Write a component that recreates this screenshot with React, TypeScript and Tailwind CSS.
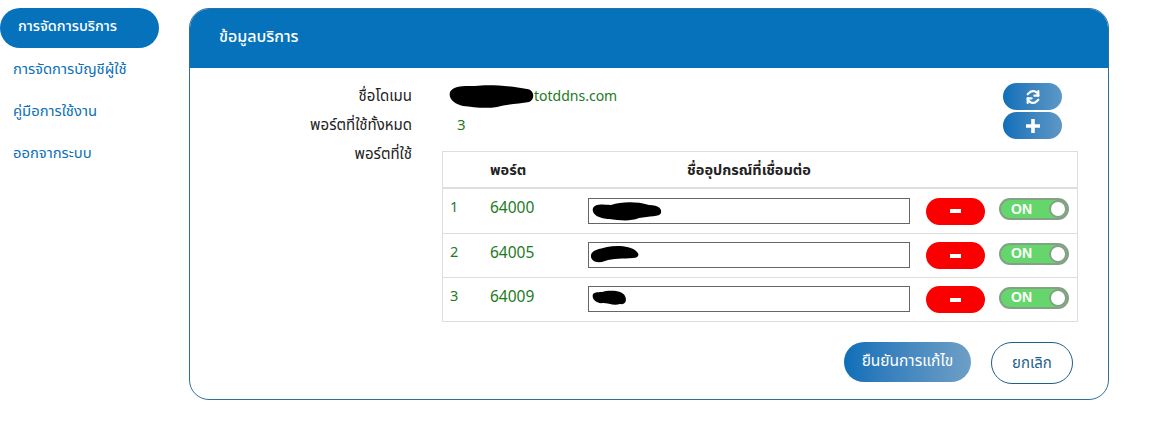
import React from 'react';

const FONT = '"Noto Sans", "Noto Sans Thai", "Open Sans", "Liberation Sans", sans-serif';

const ports = [
  { id: 1, port: '64000', blob: 'M4 8C7 3 13 5 22 5C32 2 46 1 60 5C70 5 73 9 72 13C71 17 60 16 50 18C40 22 30 20 20 19C12 19 2 15 4 8Z', blobW: 76, top: 'top-[1px]', left: 'left-[0px]' },
  { id: 2, port: '64005', blob: 'M2 11C3 6 10 5 18 3C28 1 42 2 47 7C51 10 50 14 44 14C34 15 24 14 16 17C8 20 1 17 2 11Z', blobW: 52, top: 'top-[1px]', left: 'left-[0px]' },
  { id: 3, port: '64009', blob: 'M3 6C7 3 10 5 16 3C24 2 33 3 35 8C37 12 36 17 30 16C24 18 18 15 13 15C7 16 1 11 3 6Z', blobW: 40, top: 'top-[1px]', left: 'left-[1px]' },
];

function Blob({ d, w }: { d: string; w: number }) {
  return (
    <svg width={w} height={22} viewBox={`0 0 ${w} 22`} className="block">
      <path d={d} fill="#000" />
    </svg>
  );
}

function PillButton({ children, red }: { children: React.ReactNode; red?: boolean }) {
  return (
    <button
      className={`flex h-[27px] w-[59px] items-center justify-center rounded-full ${
        red ? 'bg-[#fb0000]' : 'bg-gradient-to-r from-[#0a6fb8] to-[#5c98c6]'
      }`}
    >
      {children}
    </button>
  );
}

function Toggle() {
  return (
    <div className="flex h-[22px] w-[70px] items-center justify-between rounded-full border-2 border-[#84a086] bg-[#65d66b] pl-[10px] pr-0">
      <span className="text-[14px] font-bold text-white" style={{ fontFamily: '"Liberation Sans", sans-serif' }}>ON</span>
      <span className="h-[18px] w-[18px] rounded-full border-2 border-[#84a086] bg-white" />
    </div>
  );
}

export default function App() {
  return (
    <div className="flex h-[436px] w-[1152px] bg-white pt-2 text-[15px] text-[#222]" style={{ fontFamily: FONT }}>
      <nav className="w-[159px] shrink-0 text-[#0b70b9]">
        <div className="flex h-10 items-center rounded-[20px] bg-[#0672bc] pb-1 pl-[18px] text-[14.5px] font-medium text-white">การจัดการบริการ</div>
        <ul className="-mt-px flex flex-col pl-[13px] text-[14.8px]">
          <li className="flex h-[42px] items-center">การจัดการบัญชีผู้ใช้</li>
          <li className="flex h-[42px] items-center">คู่มือการใช้งาน</li>
          <li className="flex h-[42px] items-center">ออกจากระบบ</li>
        </ul>
      </nav>

      <section className="ml-[30px] flex h-[392px] w-[920px] flex-col overflow-hidden rounded-[20px] border border-[#2f6f9e]">
        <header className="-mx-px -mt-px flex h-[60px] shrink-0 items-center bg-[#0672bc] pb-1 pl-[30px] text-[16px] font-medium text-white">ข้อมูลบริการ</header>

        <div className="flex flex-col pr-[30px] pt-[15px]">
          <div className="flex h-[27px] items-center">
            <span className="w-[222px] pb-[2px] text-right">ชื่อโดเมน</span>
            <span className="ml-[37px] flex flex-1 items-center text-[14px] text-[#1d7a1d]">
              <svg width={85} height={24} viewBox="0 0 85 24" className="block">
                <path d="M1 7C5 0 16 1 26 1C40 -1 62 1 78 4C86 5 86 15 80 17C70 19 58 19 48 22C36 24 24 22 14 21C6 19 -1 14 1 7Z" fill="#000" />
              </svg>
              <span className="pb-[2px]">totddns.com</span>
            </span>
            <PillButton>
              <svg width={16} height={16} viewBox="0 0 24 24" fill="none" stroke="#fff" strokeWidth={3.2} strokeLinecap="round" strokeLinejoin="round">
                <path d="M20 10A8 8 0 0 0 6 6L4 8" />
                <path d="M20 3v7h-6" />
                <path d="M4 14a8 8 0 0 0 14 4l2-2" />
                <path d="M4 21v-7h6" />
              </svg>
            </PillButton>
            <span className="w-[16px]" />
          </div>

          <div className="mt-[2px] flex h-[27px] items-center">
            <span className="w-[222px] pb-[2px] text-right">พอร์ตที่ใช้ทั้งหมด</span>
            <span className="ml-[45px] flex-1 pb-[2px] text-[#1d7a1d]">3</span>
            <PillButton>
              <svg width={14} height={14} viewBox="0 0 14 14"><path d="M5.2 0h3.6v5.2H14v3.6H8.8V14H5.2V8.8H0V5.2h5.2z" fill="#fff" /></svg>
            </PillButton>
            <span className="w-[16px]" />
          </div>

          <div className="mt-3 flex">
            <span className="w-[222px] shrink-0 text-right leading-[4px]">พอร์ตที่ใช้</span>
            <div className="ml-[30px] w-[636px] border border-[#dedede]">
              <div className="flex h-[37px] items-center border-b-2 border-[#dedede] text-[14.5px] font-bold">
                <span className="ml-[47px] w-[98px]">พอร์ต</span>
                <span className="w-[322px] text-center">ชื่ออุปกรณ์ที่เชื่อมต่อ</span>
              </div>
              {ports.map((p, i) => (
                <div key={p.id} className={`flex h-[44px] items-center text-[15.5px] text-[#1d7a1d] ${i > 0 ? 'border-t border-[#dedede]' : ''}`}>
                  <span className="ml-[7px] w-[40px] pb-[8px] text-[14.5px]">{p.id}</span>
                  <span className="w-[98px] pb-[6px]">{p.port}</span>
                  <div className="relative mb-[1px] h-[26px] w-[322px] border border-[#666] bg-white">
                    <div className={`absolute ${p.top} ${p.left}`}><Blob d={p.blob} w={p.blobW} /></div>
                  </div>
                  <span className="ml-[16px]">
                    <PillButton red><span className="block h-[4px] w-[11px] bg-white" /></PillButton>
                  </span>
                  <span className="mb-[4px] ml-[14px]"><Toggle /></span>
                </div>
              ))}
            </div>
          </div>

          <div className="mr-[5px] mt-5 flex justify-end gap-5">
            <button className="h-10 w-[127px] rounded-full bg-gradient-to-r from-[#0a6fb8] to-[#6d9fc6] pb-[2px] text-[15.5px] text-white">ยืนยันการแก้ไข</button>
            <button className="h-[42px] w-[82px] rounded-full border border-[#1f5f8c] pb-[2px] text-[15px] text-[#1f5f8c]">ยกเลิก</button>
          </div>
        </div>
      </section>
    </div>
  );
}
